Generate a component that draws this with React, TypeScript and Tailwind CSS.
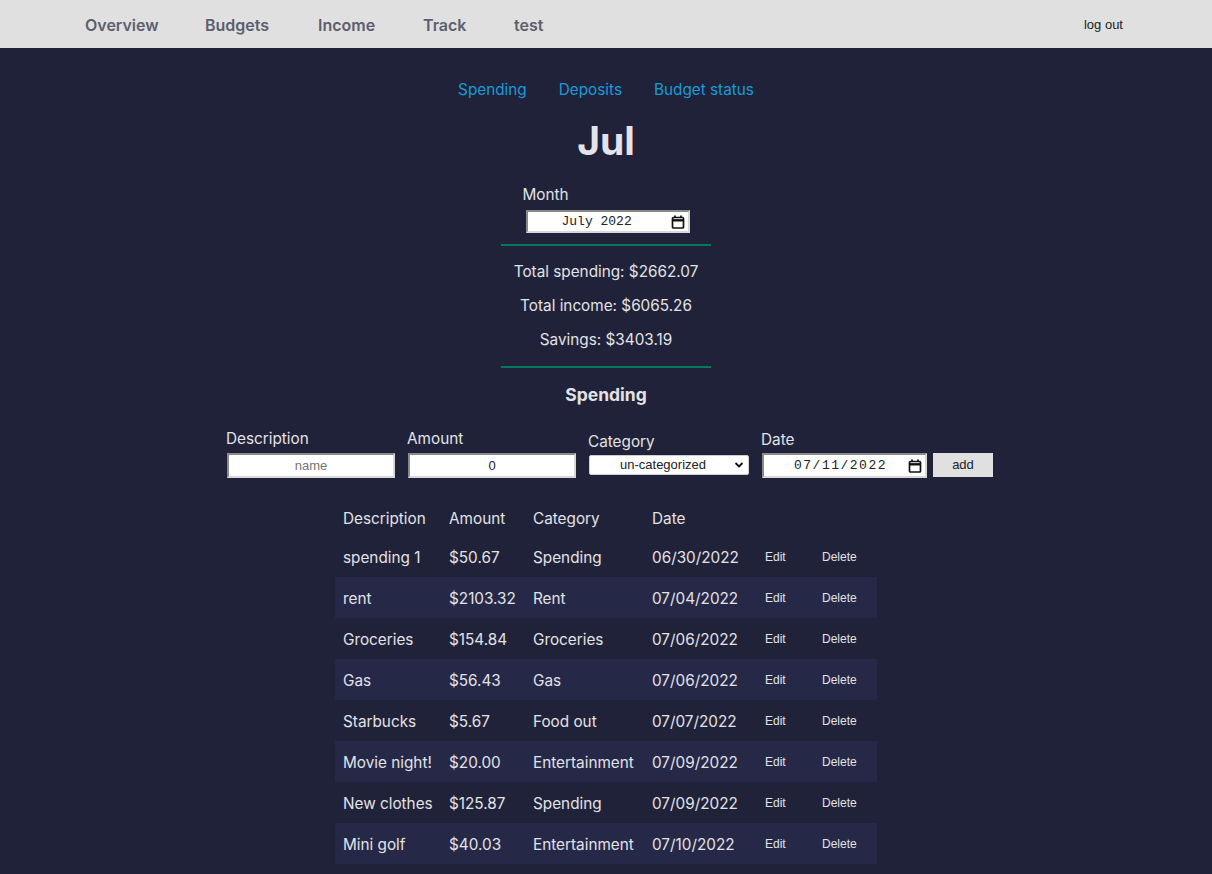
import React from 'react';

const spending = [
  { desc: 'spending 1', amount: '$50.67', cat: 'Spending', date: '06/30/2022' },
  { desc: 'rent', amount: '$2103.32', cat: 'Rent', date: '07/04/2022' },
  { desc: 'Groceries', amount: '$154.84', cat: 'Groceries', date: '07/06/2022' },
  { desc: 'Gas', amount: '$56.43', cat: 'Gas', date: '07/06/2022' },
  { desc: 'Starbucks', amount: '$5.67', cat: 'Food out', date: '07/07/2022' },
  { desc: 'Movie night!', amount: '$20.00', cat: 'Entertainment', date: '07/09/2022' },
  { desc: 'New clothes', amount: '$125.87', cat: 'Spending', date: '07/09/2022' },
  { desc: 'Mini golf', amount: '$40.03', cat: 'Entertainment', date: '07/10/2022' },
];

const inputBox =
  'bg-white text-[#222] text-center border-2 border-[#8a8a8a] border-b-[#d8d8d8] border-r-[#d8d8d8] outline-none';

function CalendarIcon() {
  return (
    <svg className="w-[14px] h-[14px] shrink-0" viewBox="0 0 14 14" fill="none" stroke="#111" strokeWidth="1.7">
      <rect x="1.5" y="2.5" width="11" height="10.5" rx="1" />
      <path d="M1.5 5.3 H12.5" strokeWidth="2.4" />
      <path d="M4 0.6 V3 M10 0.6 V3" />
    </svg>
  );
}

export default function App() {
  return (
    <div className="min-h-screen bg-[#202239] font-['Inter','Noto_Sans',sans-serif] text-[#e2e2e6]">
      {/* top nav */}
      <header className="h-12 bg-[#e0e0e0] flex items-center justify-between pl-[85px] pr-[89px] pt-[1px]">
        <nav className="flex items-center text-[16px] font-semibold text-[#5d5e6e]">
          <a className="w-[120px]">Overview</a>
          <a className="w-[113px]">Budgets</a>
          <a className="w-[105px]">Income</a>
          <a className="w-[91px]">Track</a>
          <a>test</a>
        </nav>
        <button className="text-[13px] text-[#222] font-['Liberation_Sans',Arial,sans-serif]">log out</button>
      </header>

      <main className="flex flex-col items-center pb-10 text-[15.3px]">
        <div className="flex gap-8 pt-[30px] leading-6 text-[#1a9bd7]">
          <a>Spending</a>
          <a>Deposits</a>
          <a>Budget status</a>
        </div>

        <h1 className="mt-[15px] text-[39px] leading-[48px] font-bold text-[#e4e4e8]">Jul</h1>

        <div className="mt-[18px] w-[167px] flex flex-col">
          <label className="leading-6">Month</label>
          <div className={`${inputBox} mt-[3px] ml-[3px] w-[164px] h-[23px] flex items-center pl-[34px] pr-[3px]`}>
            <span className="flex-1 text-left text-[13px] font-['Liberation_Mono',monospace]">July 2022</span>
            <CalendarIcon />
          </div>
        </div>

        <div className="mt-[11px] w-[210px] h-[2px] bg-[#067a58]" />

        <div className="mt-[14px] flex flex-col items-center gap-[10px] leading-6">
          <p>Total spending: $2662.07</p>
          <p>Total income: $6065.26</p>
          <p>Savings: $3403.19</p>
        </div>

        <div className="mt-[14px] w-[210px] h-[2px] bg-[#067a58]" />

        <h2 className="mt-[13px] text-[17.5px] leading-7 font-bold">Spending</h2>

        {/* add form */}
        <div className="mt-[18px] ml-[7px] flex items-end gap-3">
          <div className="flex flex-col w-[169px]">
            <label className="leading-6">Description</label>
            <input
              placeholder="name"
              className={`${inputBox} mt-[2px] ml-[1px] w-[168px] h-[25px] text-[13px] font-['Liberation_Sans',Arial,sans-serif] placeholder:text-[#757575]`}
            />
          </div>
          <div className="flex flex-col w-[169px]">
            <label className="leading-6">Amount</label>
            <input
              defaultValue="0"
              className={`${inputBox} mt-[2px] ml-[1px] w-[168px] h-[25px] text-[13px] font-['Liberation_Sans',Arial,sans-serif]`}
            />
          </div>
          <div className="flex flex-col w-[161px] mb-[3px]">
            <label className="leading-6">Category</label>
            <div className="relative mt-[1px] ml-[1px] w-[160px] h-[20px]">
              <select className="appearance-none block w-full h-full leading-[18px] bg-white text-[#222] border border-[#cfcfcf] rounded-[2px] text-[13px] font-['Liberation_Sans',Arial,sans-serif] [text-align-last:center] pr-3">
                <option>un-categorized</option>
              </select>
              <svg
                className="absolute right-[5px] top-[6px] w-[10px] h-[8px] pointer-events-none"
                viewBox="0 0 10 8"
                fill="none"
                stroke="#111"
                strokeWidth="1.8"
              >
                <path d="M1.5 2 L5 5.5 L8.5 2" />
              </svg>
            </div>
          </div>
          <div className="flex items-end gap-[6px]">
            <div className="flex flex-col w-[166px]">
              <label className="leading-6">Date</label>
              <div className={`${inputBox} mt-[1px] ml-[1px] w-[165px] h-[25px] flex items-center pl-[30px] pr-[3px]`}>
                <span className="flex-1 text-left text-[13px] tracking-[1.5px] font-['Liberation_Mono',monospace]">07/11/2022</span>
                <CalendarIcon />
              </div>
            </div>
            <button className="mb-[1px] w-[60px] h-[24px] bg-[#e0e0e0] text-[#222] text-[13px] font-['Liberation_Sans',Arial,sans-serif]">
              add
            </button>
          </div>
        </div>

        {/* spending table */}
        <table className="mt-[23px] w-[542px] table-fixed border-collapse text-left">
          <colgroup>
            <col className="w-[106px]" />
            <col className="w-[84px]" />
            <col className="w-[119px]" />
            <col className="w-[112px]" />
            <col className="w-[58px]" />
            <col className="w-[63px]" />
          </colgroup>
          <thead>
            <tr className="h-[35px]">
              <th className="font-normal px-2 pt-[2px]">Description</th>
              <th className="font-normal px-2 pt-[2px]">Amount</th>
              <th className="font-normal px-2 pt-[2px]">Category</th>
              <th className="font-normal px-2 pt-[2px]">Date</th>
              <th />
              <th />
            </tr>
          </thead>
          <tbody>
            {spending.map((s, i) => (
              <tr key={i} className={`h-[41px] ${i % 2 === 1 ? 'bg-[#262847]' : ''}`}>
                <td className="px-2 pt-[3px] whitespace-nowrap">{s.desc}</td>
                <td className="px-2 pt-[3px] whitespace-nowrap">{s.amount}</td>
                <td className="px-2 pt-[3px] whitespace-nowrap">{s.cat}</td>
                <td className="px-2 pt-[3px] whitespace-nowrap">{s.date}</td>
                <td className="pl-[9px]">
                  <button className="text-[12px] font-['Liberation_Sans',Arial,sans-serif]">Edit</button>
                </td>
                <td className="pl-2">
                  <button className="text-[12px] font-['Liberation_Sans',Arial,sans-serif]">Delete</button>
                </td>
              </tr>
            ))}
          </tbody>
        </table>
      </main>
    </div>
  );
}
